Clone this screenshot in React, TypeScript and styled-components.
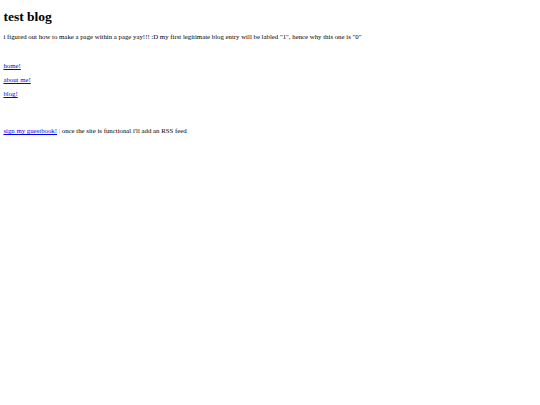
import React from "react";
import styled, { createGlobalStyle } from "styled-components";

const GlobalStyle = createGlobalStyle`
  body {
    margin: 3.4px;
    background: #ffffff;
    color: #000000;
    font-family: "Liberation Serif", "Times New Roman", serif;
    font-size: 6.8px;
  }
`;

const Title = styled.h1`
  font-size: 13.5px;
  font-weight: bold;
  line-height: 15px;
  margin: 6px 0 0;
`;

const Intro = styled.p`
  margin: 9px 0 0;
  line-height: 8px;
`;

const Nav = styled.nav`
  display: flex;
  flex-direction: column;
  gap: 6px;
  margin-top: 21px;
`;

const Link = styled.a`
  color: #0000ee;
  text-decoration: underline;
  line-height: 8px;
`;

const Footer = styled.p`
  margin: 29px 0 0;
  line-height: 8px;
`;

const Sep = styled.span`
  color: #8a8a8a;
`;

const App = () => {
  return (
    <>
      <GlobalStyle />
      <Title>test blog</Title>
      <Intro>
        i figured out how to make a page within a page yay!!! :D my first legitimate blog entry
        will be labled "1", hence why this one is "0"
      </Intro>
      <Nav>
        <Link href="#">home!</Link>
        <Link href="#">about me!</Link>
        <Link href="#">blog!</Link>
      </Nav>
      <Footer>
        <Link href="#">sign my guestbook!</Link> <Sep>|</Sep> once the site is functional i'll add
        an RSS feed
      </Footer>
    </>
  );
};

export default App;
